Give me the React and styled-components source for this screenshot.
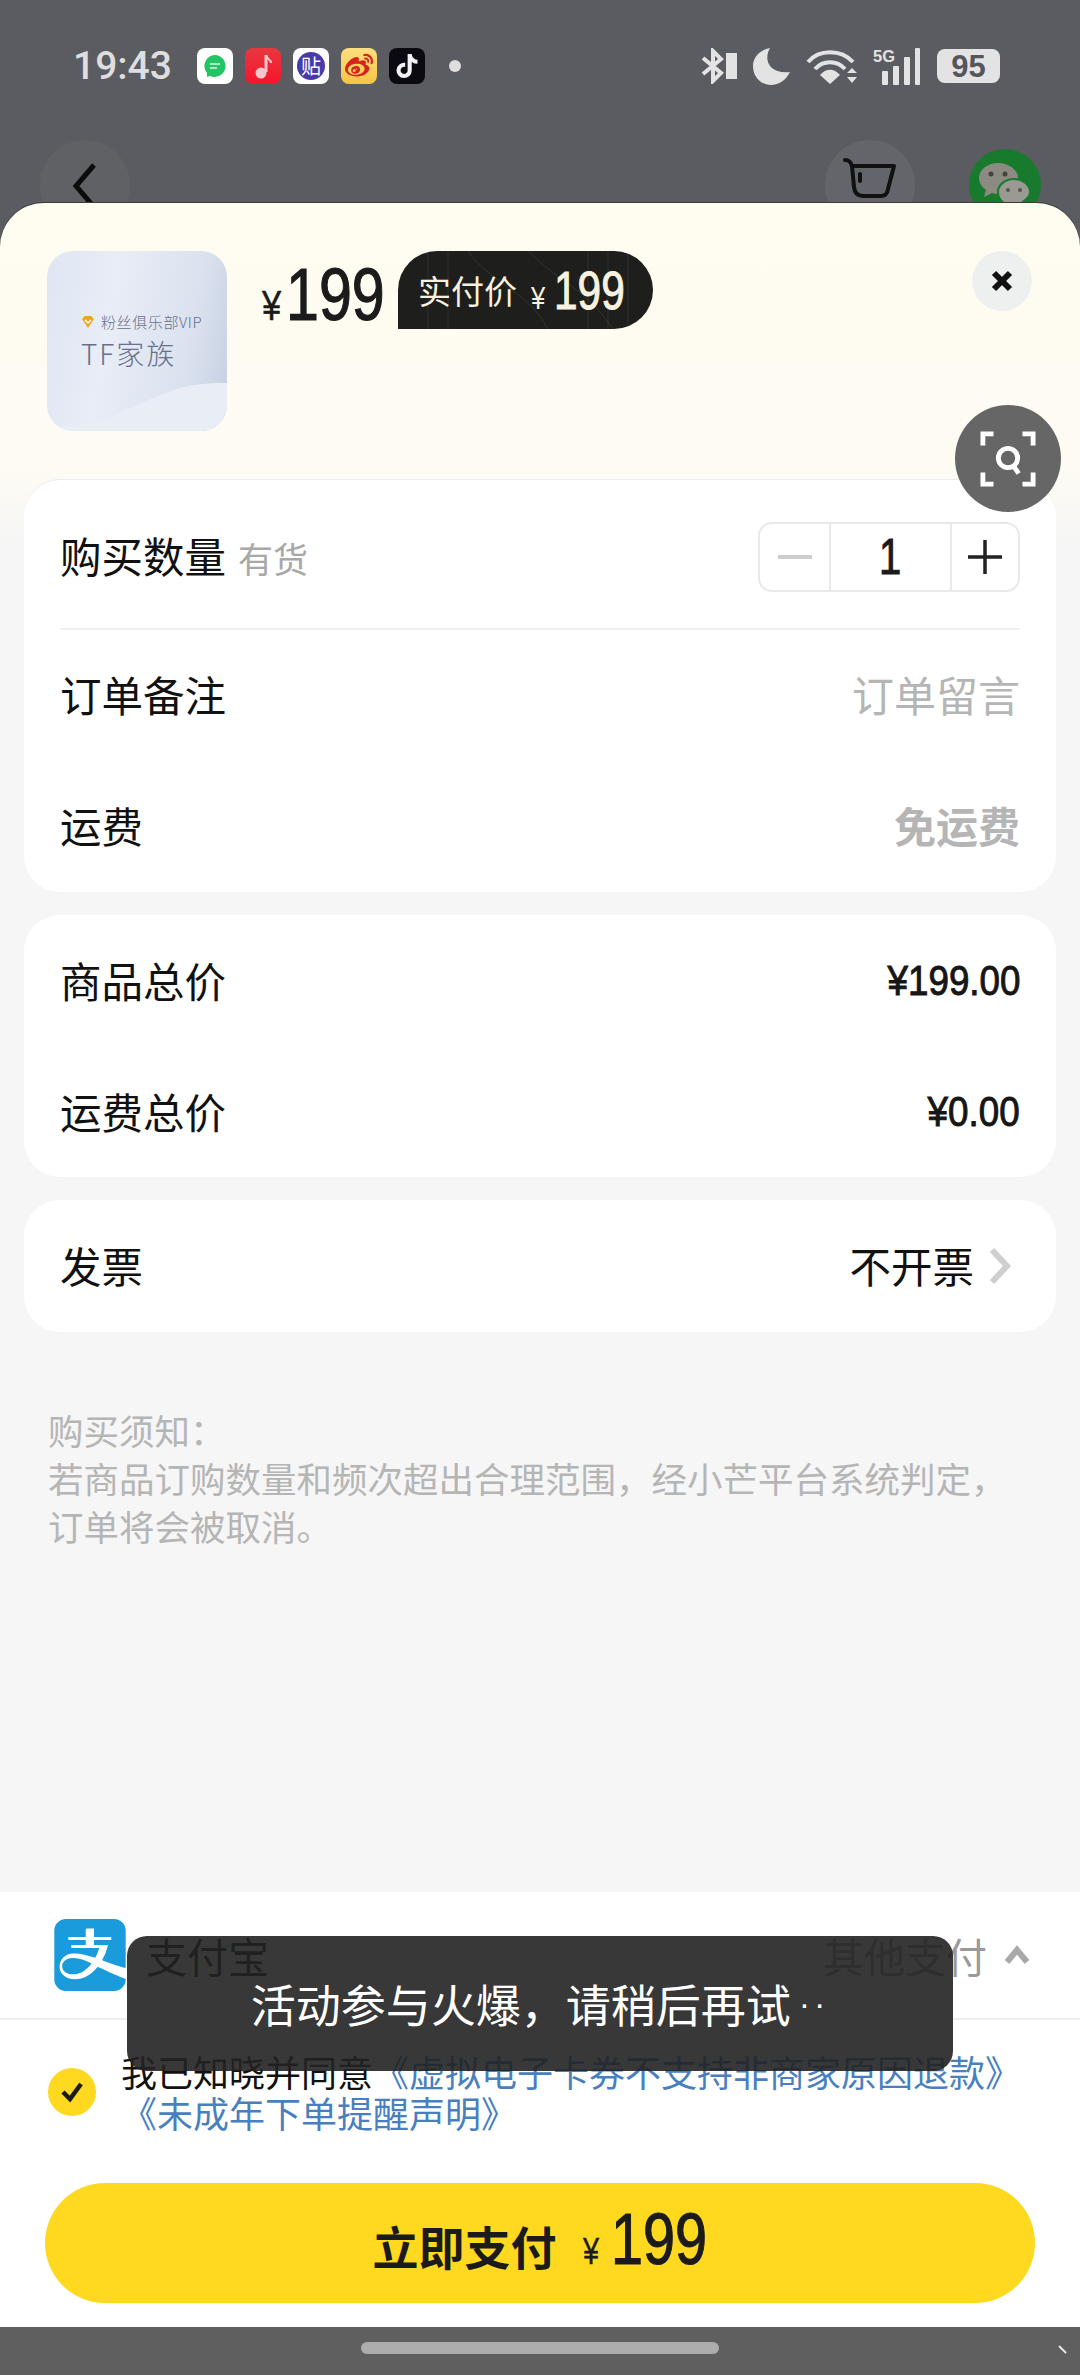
import React from 'react';
import styled, { createGlobalStyle } from 'styled-components';
import { SiAlipay } from 'react-icons/si';
import { FaTiktok, FaWeibo } from 'react-icons/fa';

const GlobalStyle = createGlobalStyle`
	html, body {
		margin: 0;
		padding: 0;
		background: #5b5c61;
	}
	* {
		box-sizing: border-box;
	}
`;

const cjk = `'Noto Sans CJK SC', 'Noto Sans', sans-serif`;
const latin = `'Liberation Sans', Arial, sans-serif`;

const Page = styled.div`
	position: relative;
	width: 1080px;
	height: 2375px;
	display: flex;
	flex-direction: column;
	overflow: hidden;
	background: #5b5c61;
	font-family: ${cjk};
	color: #111;
`;

/* ---- behind the sheet ---- */
const Backdrop = styled.div`
	height: 203px;
	flex: none;
	overflow: hidden;
	padding-top: 46px;
`;

const StatusBar = styled.div`
	height: 40px;
	display: flex;
	align-items: center;
	padding: 0 77px 0 73px;
`;

const Clock = styled.span`
	width: 124px;
	font-family: Roboto, sans-serif;
	font-size: 39px;
	font-weight: 500;
	color: #dedede;
`;

const AppIcon = styled.span`
	width: 36px;
	height: 36px;
	margin-right: 12px;
	border-radius: 8px;
	display: flex;
	align-items: center;
	justify-content: center;
	overflow: hidden;
	background: ${(p) => p.$bg};
	color: ${(p) => p.$fg || '#fff'};
`;

const TieGlyph = styled.span`
	width: 28px;
	height: 28px;
	border-radius: 50%;
	background: #4a3aa8;
	color: #fff;
	font-size: 20px;
	line-height: 28px;
	text-align: center;
`;

const NoticeDot = styled.span`
	width: 12px;
	height: 12px;
	margin-left: 12px;
	border-radius: 50%;
	background: #dedede;
`;

const StatusRight = styled.div`
	margin-left: auto;
	display: flex;
	align-items: center;
	gap: 16px;
`;

const Battery = styled.span`
	width: 63px;
	height: 34px;
	margin-right: 3px;
	border-radius: 8px;
	background: #e3e3e3;
	color: #55565b;
	font-family: ${latin};
	font-size: 31px;
	font-weight: 700;
	line-height: 35px;
	text-align: center;
`;

const NavRow = styled.div`
	display: flex;
	align-items: flex-start;
	margin-top: 54px;
	padding: 0 39px 0 40px;
`;

const NavCircle = styled.div`
	width: 90px;
	height: 90px;
	border-radius: 50%;
	background: rgba(255, 255, 255, ${(p) => p.$alpha});
	display: flex;
	align-items: center;
	justify-content: center;
	margin-left: ${(p) => p.$push || 0};
	padding-bottom: ${(p) => p.$lift || 0};
`;

const WechatCircle = styled.div`
	width: 72px;
	height: 72px;
	margin: 9px 0 0 54px;
	border-radius: 50%;
	background: #187a2d;
	display: flex;
	align-items: center;
	justify-content: center;
`;

/* ---- sheet ---- */
const Sheet = styled.div`
	flex: 1;
	border-radius: 44px 44px 0 0;
	background: linear-gradient(#fffdf0 0, #fdfbf3 265px, #f6f6f6 345px);
	box-shadow: 0 -1px 0 #3b3b3b;
`;

const Header = styled.div`
	height: 277px;
	display: flex;
	align-items: flex-start;
	padding: 48px 48px 0 47px;
`;

const Thumb = styled.div`
	position: relative;
	width: 180px;
	height: 180px;
	border-radius: 26px;
	overflow: hidden;
	background: linear-gradient(100deg, #dfe6f3 0, #e8edf6 35%, #dbe2ef 75%, #c5cfe1 100%);
	padding: 62px 0 0 34px;
	color: #68718b;
`;

const ThumbTop = styled.div`
	position: relative;
	display: flex;
	align-items: center;
	gap: 6px;
	font-size: 15px;
	line-height: 18px;
	font-weight: 300;
	letter-spacing: 0.6px;
	white-space: nowrap;
`;

const ThumbTitle = styled.div`
	position: relative;
	margin-top: 5px;
	font-size: 28px;
	line-height: 34px;
	font-weight: 300;
	letter-spacing: 2px;
`;

const ThumbWave = styled.svg`
	position: absolute;
	left: 0;
	bottom: 0;
`;

const PriceGroup = styled.div`
	display: flex;
	align-items: flex-start;
	margin-left: 35px;
`;

const Price = styled.div`
	display: flex;
	align-items: baseline;
	margin-top: 7px;
	color: #1b1b1b;
`;

// no condensed face is installed, so squeeze Liberation Sans to the narrow digit width
const Digits = styled.span`
	display: inline-block;
	font-family: ${latin};
	font-size: ${(p) => p.$size}px;
	line-height: 1;
	-webkit-text-stroke: ${(p) => p.$stroke || 0}px currentColor;
	transform: scaleX(0.8);
	transform-origin: left center;
	margin-right: calc(${(p) => p.$gap || 0}px - ${(p) => (p.$n || 1) * 0.111}em);
`;

const PayBadge = styled.div`
	position: relative;
	height: 78px;
	margin-left: 13px;
	padding: 0 28px 0 20px;
	display: flex;
	align-items: center;
	overflow: hidden;
	border-radius: 39px 39px 39px 0;
	background: #1e1e1c;
	color: #f6f2df;
`;

const BadgeLines = styled.svg`
	position: absolute;
	left: 0;
	top: 0;
`;

const BadgeLabel = styled.span`
	position: relative;
	font-size: 33px;
	line-height: 40px;
	margin-right: 14px;
	font-weight: 400;
`;

const BadgePrice = styled.span`
	position: relative;
	display: flex;
	align-items: baseline;
	color: #f6f2df;
`;

const CloseButton = styled.div`
	width: 60px;
	height: 60px;
	margin-left: auto;
	border-radius: 50%;
	background: #eef0f0;
	display: flex;
	align-items: center;
	justify-content: center;
`;

const ScanButton = styled.div`
	position: absolute;
	top: 405px;
	left: 955px;
	width: 106px;
	height: 107px;
	border-radius: 50%;
	background: #666;
	display: flex;
	align-items: center;
	justify-content: center;
`;

const Cards = styled.div`
	display: flex;
	flex-direction: column;
	gap: 23px;
	padding: 0 24px;
`;

const Card = styled.div`
	border-radius: 36px;
	background: #fff;
	padding: 0 36px;
	box-shadow: ${(p) => (p.$line ? '0 -1px 0 #ececec' : 'none')};
`;

const Row = styled.div`
	height: ${(p) => p.$h || 131}px;
	display: flex;
	align-items: center;
	justify-content: space-between;
	padding-top: ${(p) => p.$shift || 0}px;
	border-bottom: ${(p) => (p.$divided ? '2px solid #efefef' : '0')};
`;

const Label = styled.span`
	display: inline-block;
	margin-top: -2px;
	font-size: 41.5px;
	line-height: 50px;
	font-weight: 400;
	color: #111;
`;

const Stock = styled.span`
	margin-left: 12px;
	font-size: 35px;
	line-height: 50px;
	color: #a8a8a8;
`;

const Hint = styled.span`
	margin-top: -2px;
	font-size: 42px;
	line-height: 50px;
	font-weight: ${(p) => (p.$bold ? 700 : 400)};
	color: #b5b5b5;
`;

const Amount = styled.span`
	font-family: ${latin};
	font-size: 43px;
	font-weight: 400;
	-webkit-text-stroke: 1px #161616;
	color: #161616;
	transform: scaleX(0.855);
	transform-origin: right center;
`;

const Stepper = styled.div`
	width: 262px;
	height: 70px;
	display: grid;
	grid-template-columns: 69px 121px 68px;
	border: 2px solid #e9e9e9;
	border-radius: 14px;
`;

const StepCell = styled.div`
	display: flex;
	align-items: center;
	justify-content: center;
	color: #1a1a1a;
	border-left: ${(p) => (p.$split ? '2px solid #e9e9e9' : '0')};
`;

const InvoiceValue = styled.span`
	display: flex;
	align-items: center;
	gap: 14px;
	margin-right: 8px;
`;

const Notice = styled.div`
	margin-top: 74px;
	padding: 0 48px;
	font-size: 35.5px;
	line-height: 48px;
	color: #b5b5b5;
	font-weight: 400;
	white-space: nowrap;
`;

/* ---- footer ---- */
const Footer = styled.div`
	flex: none;
	height: 435px;
	background: #fff;
`;

const PayRow = styled.div`
	height: 128px;
	display: flex;
	align-items: center;
	padding: 0 50px 0 54px;
	border-bottom: 2px solid #eee;
`;

const PayName = styled.span`
	margin-left: 20px;
	font-size: 41px;
	color: #111;
`;

const PayOther = styled.span`
	margin-left: auto;
	font-size: 41px;
	color: #9a9a9a;
`;

const PayCaret = styled.svg`
	margin-left: 17px;
`;

const Agreement = styled.div`
	display: flex;
	align-items: center;
	padding: 31px 40px 0 48px;
	gap: 25px;
`;

const CheckDot = styled.span`
	flex: none;
	width: 48px;
	height: 48px;
	border-radius: 50%;
	background: #ffd91f;
	display: flex;
	align-items: center;
	justify-content: center;
`;

const AgreeText = styled.div`
	font-size: 36px;
	line-height: 41px;
	color: #111;
	white-space: nowrap;
`;

const AgreeLink = styled.span`
	color: #4a7fbf;
`;

const PayButton = styled.div`
	height: 120px;
	margin: 50px 45px 0;
	border-radius: 60px;
	background: #ffd91f;
	display: flex;
	align-items: center;
	justify-content: center;
	color: #1b1b1b;
`;

const PayText = styled.span`
	font-size: 46px;
	font-weight: 700;
	line-height: 60px;
	margin: 4px 27px 0 0;
`;

const PayAmount = styled.span`
	display: flex;
	align-items: baseline;
	margin-top: -8px;
`;

const HomeBar = styled.div`
	position: relative;
	flex: none;
	height: 48px;
	background: #5f5f5f;
	padding-top: 15px;
`;

const HomePill = styled.div`
	width: 358px;
	height: 12px;
	margin: 0 auto;
	border-radius: 6px;
	background: #adadad;
`;

const CornerMark = styled.svg`
	position: absolute;
	top: 18px;
	right: 12px;
`;

const Toast = styled.div`
	position: absolute;
	left: 127px;
	top: 1936px;
	width: 826px;
	height: 135px;
	border-radius: 20px;
	background: rgba(34, 34, 34, 0.9);
	color: #fff;
	font-size: 45px;
	display: flex;
	align-items: center;
	justify-content: center;
	white-space: nowrap;
`;

const ToastDots = styled.span`
	font-family: ${latin};
	font-size: 34px;
	letter-spacing: 4px;
	margin-left: 8px;
`;

const BluetoothIcon = () => (
	<svg width="36" height="36" viewBox="0 0 36 36" fill="none">
		<path d="M2 10 L20 25 L12 33 V3 L20 11 L2 26" stroke="#e3e3e3" strokeWidth="4" />
		<rect x="25" y="5" width="11" height="26" fill="#e3e3e3" />
	</svg>
);

const MoonIcon = () => (
	<svg width="37" height="37" viewBox="0 0 37 37">
		<path d="M17 0 C11 10 14 26 37 24 C33 32 26 37 18 37 C8 37 0 29 0 18 C0 9 7 2 17 0 Z" fill="#e3e3e3" />
	</svg>
);

const WifiIcon = () => (
	<svg width="51" height="37" viewBox="0 0 51 37" fill="none">
		<path d="M2 14 C13 1 35 1 47 14" stroke="#e3e3e3" strokeWidth="4" />
		<path d="M9 21 C17 12 31 12 39 21" stroke="#e3e3e3" strokeWidth="4" />
		<path d="M14 27 L24 36 L34 27 C28 20 20 20 14 27 Z" fill="#e3e3e3" />
		<path d="M41 25 L46 20 L51 25 Z M41 29 L46 35 L51 29 Z" fill="#e3e3e3" />
	</svg>
);

const SignalIcon = () => (
	<svg width="48" height="38" viewBox="0 0 48 38">
		<text x="0" y="15" fontFamily="Liberation Sans" fontSize="17" fontWeight="700" fill="#e3e3e3" textLength="22" lengthAdjust="spacingAndGlyphs">5G</text>
		<rect x="9" y="24" width="6" height="14" rx="1" fill="#e3e3e3" />
		<rect x="20" y="19" width="6" height="19" rx="1" fill="#e3e3e3" />
		<rect x="31" y="10" width="6" height="28" rx="1" fill="#e3e3e3" />
		<rect x="42" y="1" width="5" height="37" rx="1" fill="#e3e3e3" />
	</svg>
);

const BackIcon = () => (
	<svg width="30" height="48" viewBox="0 0 30 48" fill="none">
		<path d="M24 4 L6 25 L24 46" stroke="#0c0c0c" strokeWidth="5" />
	</svg>
);

const CartIcon = () => (
	<svg width="54" height="40" viewBox="0 0 54 40" fill="none" stroke="#111" strokeWidth="4" strokeLinecap="round" strokeLinejoin="round">
		<path d="M2 2 C6 2 8 4 9 8 L11 29 Q12 38 20 38 H38 Q44 38 45 31 L51 8 H9" />
		<path d="M17 16 V23" />
	</svg>
);

const WechatIcon = () => (
	<svg width="54" height="52" viewBox="0 0 54 52">
		<path d="M20 4 C9 4 1 11 1 19 C1 24 4 28 8 31 L6 38 L14 34 C16 34.500 18 35 20 35 C32 35 40 28 40 19 C40 11 31 4 20 4 Z" fill="#8b8b82" />
		<path d="M36 20 C27 20 20 26 20 33 C20 41 27 47 36 47 L44 50 L43 44 C48 41 52 38 52 33 C52 26 45 20 36 20 Z" fill="#9a9a92" stroke="#187a2d" strokeWidth="2" />
		<circle cx="13" cy="15" r="2.500" fill="#444" />
		<circle cx="27" cy="15" r="2.500" fill="#444" />
		<circle cx="30" cy="31" r="2" fill="#555" />
		<circle cx="42" cy="31" r="2" fill="#555" />
	</svg>
);

const ScanIcon = () => (
	<svg width="56" height="56" viewBox="0 0 58 58" fill="none" stroke="#fff" strokeWidth="5">
		<path d="M14 3 H3 V15 M44 3 H55 V15 M3 43 V55 H14 M55 43 V55 H44" />
		<circle cx="29" cy="28" r="10" />
		<path d="M34 35 L40 44" />
	</svg>
);

const COMMA = '\uFF0C';
const COLON = '\uFF1A';

const App = () => {
	return (
		<Page>
			<GlobalStyle />
			<Backdrop>
				<StatusBar>
					<Clock>19:43</Clock>
					<AppIcon $bg="#fff">
						<svg width="26" height="26" viewBox="0 0 26 26">
							<path d="M13 2 A11 11 0 1 1 8 23 L5 24 L5 20 A11 11 0 0 1 13 2 Z" fill="#22c466" />
							<path d="M8 11 H18 M8 15 H15" stroke="#d6f5e2" strokeWidth="1.500" />
						</svg>
					</AppIcon>
					<AppIcon $bg="linear-gradient(#e8383f, #f5142c)">
						<svg width="24" height="28" viewBox="0 0 24 28" fill="none">
							<path d="M15 3 V20" stroke="#f7c5cb" strokeWidth="3" />
							<path d="M15 3 C16 8 20 7 20 11" stroke="#f7c5cb" strokeWidth="2" />
							<circle cx="10" cy="21" r="5.500" fill="#f7c5cb" />
						</svg>
					</AppIcon>
					<AppIcon $bg="#fff">
						<TieGlyph>贴</TieGlyph>
					</AppIcon>
					<AppIcon $bg="linear-gradient(#ffdf7e, #f6c445)" $fg="#d5231d">
						<FaWeibo size={28} />
					</AppIcon>
					<AppIcon $bg="#0b0a12" $fg="#f2f2f2">
						<FaTiktok size={24} />
					</AppIcon>
					<NoticeDot />
					<StatusRight>
						<BluetoothIcon />
						<MoonIcon />
						<WifiIcon />
						<SignalIcon />
						<Battery>95</Battery>
					</StatusRight>
				</StatusBar>
				<NavRow>
					<NavCircle $alpha={0.03}>
						<BackIcon />
					</NavCircle>
					<NavCircle $alpha={0.06} $push="695px" $lift="14px">
						<CartIcon />
					</NavCircle>
					<WechatCircle>
						<WechatIcon />
					</WechatCircle>
				</NavRow>
			</Backdrop>

			<Sheet>
				<Header>
					<Thumb>
						<ThumbWave width="180" height="60" viewBox="0 0 180 60">
							<path d="M0 56 C50 60 90 30 130 18 C150 12 170 12 180 12 V60 H0 Z" fill="#e9edf6" />
						</ThumbWave>
						<ThumbTop>
							<svg width="14" height="14" viewBox="0 0 14 14">
								<path d="M1 4 L4 1 H10 L13 4 L7 13 Z" fill="#eea51f" />
								<path d="M4 5 L7 8 L10 5" stroke="#fff" strokeWidth="1.500" fill="none" />
							</svg>
							粉丝俱乐部VIP
						</ThumbTop>
						<ThumbTitle>TF家族</ThumbTitle>
					</Thumb>
					<PriceGroup>
						<Price>
							<Digits $size={43} $gap={5} $stroke={0.5}>¥</Digits>
							<Digits $size={74} $n={3} $stroke={1.2}>199</Digits>
						</Price>
						<PayBadge>
							<BadgeLines width="260" height="78" viewBox="0 0 260 78" fill="none" stroke="rgba(255,255,255,0.09)" strokeWidth="1">
								<path d="M70 0 C90 30 130 40 150 78 M130 0 C160 30 190 40 215 78 M30 0 V78 M50 0 V78 M190 0 V78 M210 0 V78 M230 0 V78" />
							</BadgeLines>
							<BadgeLabel>实付价</BadgeLabel>
							<BadgePrice>
								<Digits $size={32} $gap={9}>¥</Digits>
								<Digits $size={53} $n={3} $stroke={1}>199</Digits>
							</BadgePrice>
						</PayBadge>
					</PriceGroup>
					<CloseButton>
						<svg width="22" height="24" viewBox="0 0 22 24" fill="none">
							<path d="M3 4 L19 20 M19 4 L3 20" stroke="#111" strokeWidth="6" />
						</svg>
					</CloseButton>
				</Header>

				<Cards>
					<Card $line>
						<Row $h={150} $divided $shift={6}>
							<span>
								<Label>购买数量</Label>
								<Stock>有货</Stock>
							</span>
							<Stepper>
								<StepCell>
									<svg width="34" height="4"><rect width="34" height="4" fill="#cdcdcd" /></svg>
								</StepCell>
								<StepCell $split>
									<Digits $size={50} $stroke={1}>1</Digits>
								</StepCell>
								<StepCell $split>
									<svg width="34" height="34" viewBox="0 0 34 34">
										<path d="M0 17 H34 M17 0 V34" stroke="#222" strokeWidth="3.500" />
									</svg>
								</StepCell>
							</Stepper>
						</Row>
						<Row $h={130}>
							<Label>订单备注</Label>
							<Hint>订单留言</Hint>
						</Row>
						<Row $h={132}>
							<Label>运费</Label>
							<Hint $bold>免运费</Hint>
						</Row>
					</Card>
					<Card>
						<Row>
							<Label>商品总价</Label>
							<Amount>¥199.00</Amount>
						</Row>
						<Row>
							<Label>运费总价</Label>
							<Amount>¥0.00</Amount>
						</Row>
					</Card>
					<Card>
						<Row $h={132}>
							<Label>发票</Label>
							<InvoiceValue>
								<Label>不开票</Label>
								<svg width="24" height="38" viewBox="0 0 24 38" fill="none">
									<path d="M4 3 L19 19 L4 35" stroke="#cfcfcf" strokeWidth="6" />
								</svg>
							</InvoiceValue>
						</Row>
					</Card>
				</Cards>

				<Notice>
					{`购买须知${COLON}`}
					<br />
					{`若商品订购数量和频次超出合理范围${COMMA}经小芒平台系统判定${COMMA}`}
					<br />
					订单将会被取消。
				</Notice>
			</Sheet>

			<Footer>
				<PayRow>
					<SiAlipay size={72} color="#1a9bdc" />
					<PayName>支付宝</PayName>
					<PayOther>其他支付</PayOther>
					<PayCaret width="26" height="20" viewBox="0 0 26 20" fill="none">
						<path d="M3 17 L13 5 L23 17" stroke="#a9a9a9" strokeWidth="6" />
					</PayCaret>
				</PayRow>
				<Agreement>
					<CheckDot>
						<svg width="24" height="22" viewBox="0 0 24 22" fill="none">
							<path d="M3 11 L10 18 L21 3" stroke="#1a1a1a" strokeWidth="4.500" />
						</svg>
					</CheckDot>
					<AgreeText>
						我已知晓并同意
						<AgreeLink>《虚拟电子卡券不支持非商家原因退款》</AgreeLink>
						<br />
						<AgreeLink>《未成年下单提醒声明》</AgreeLink>
					</AgreeText>
				</Agreement>
				<PayButton>
					<PayText>立即支付</PayText>
					<PayAmount>
						<Digits $size={36} $gap={12} $stroke={0.5}>¥</Digits>
						<Digits $size={72} $n={3} $stroke={1.2}>199</Digits>
					</PayAmount>
				</PayButton>
			</Footer>

			<HomeBar>
				<HomePill />
				<CornerMark width="10" height="10" viewBox="0 0 10 10">
					<path d="M1 1 L8 8" stroke="#e8e8e8" strokeWidth="2" />
				</CornerMark>
			</HomeBar>

			<ScanButton>
				<ScanIcon />
			</ScanButton>
			<Toast>
				{`活动参与火爆${COMMA}请稍后再试`}
				<ToastDots>··</ToastDots>
			</Toast>
		</Page>
	);
};

export default App;
